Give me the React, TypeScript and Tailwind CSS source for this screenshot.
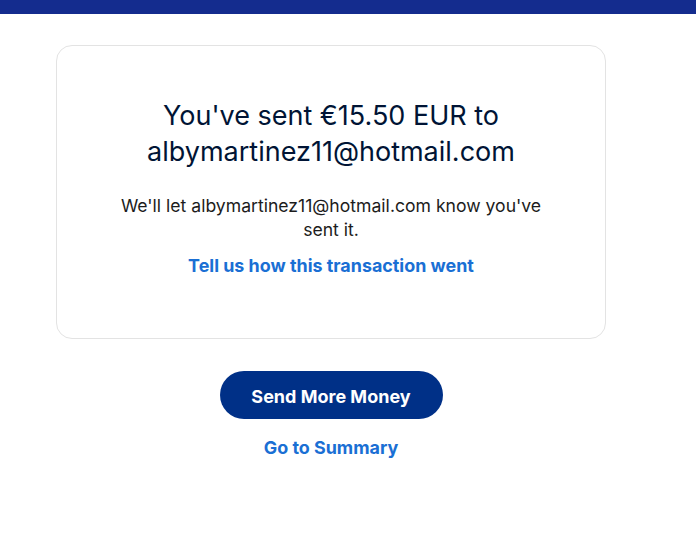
export default function App() {
  return (
    <div className="min-h-[537px] bg-white" style={{ fontFamily: 'Inter, "Liberation Sans", Arial, sans-serif' }}>
      <div className="h-[14px] bg-[#142c8e]" />
      <div className="ml-[56px] w-[550px] pt-[31px]">
        <div className="h-[294px] rounded-[16px] border border-[#e3e3e3] px-[40px] pt-[52px] text-center">
          <h1 className="text-[27px] leading-[36px] text-[#001435]">
            You've sent €15.50 EUR to
            <br />
            albymartinez11@hotmail.com
          </h1>
          <p className="mx-auto mt-[24px] w-[440px] text-[17.6px] leading-[24px] text-[#1c1c1c]">
            We'll let albymartinez11@hotmail.com know you've sent it.
          </p>
          <p className="mt-[12px] text-[17.9px] font-bold leading-[24px] text-[#1a6fd4]">
            Tell us how this transaction went
          </p>
        </div>
        <div className="mt-[32px] flex flex-col items-center">
          <button className="h-[48px] w-[223px] rounded-full bg-[#003087] pt-[3px] text-[18px] font-bold text-white">
            Send More Money
          </button>
          <a className="mt-[17px] text-[17.9px] font-bold leading-[24px] text-[#1a6fd4]">Go to Summary</a>
        </div>
      </div>
    </div>
  );
}
